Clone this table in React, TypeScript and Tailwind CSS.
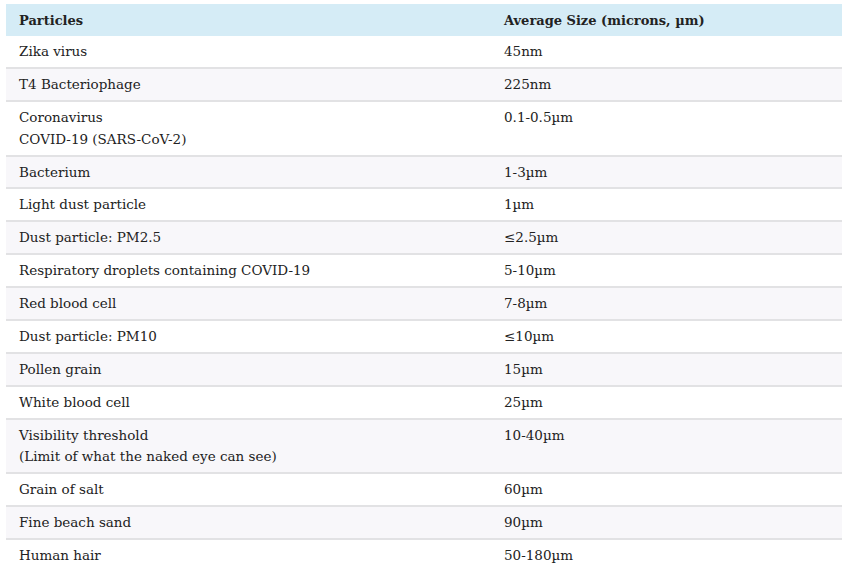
import React from 'react';

type Row = { name: string[]; size: string };

const rows: Row[] = [
  { name: ['Zika virus'], size: '45nm' },
  { name: ['T4 Bacteriophage'], size: '225nm' },
  { name: ['Coronavirus', 'COVID-19 (SARS-CoV-2)'], size: '0.1-0.5µm' },
  { name: ['Bacterium'], size: '1-3µm' },
  { name: ['Light dust particle'], size: '1µm' },
  { name: ['Dust particle: PM2.5'], size: '≤2.5µm' },
  { name: ['Respiratory droplets containing COVID-19'], size: '5-10µm' },
  { name: ['Red blood cell'], size: '7-8µm' },
  { name: ['Dust particle: PM10'], size: '≤10µm' },
  { name: ['Pollen grain'], size: '15µm' },
  { name: ['White blood cell'], size: '25µm' },
  { name: ['Visibility threshold', '(Limit of what the naked eye can see)'], size: '10-40µm' },
  { name: ['Grain of salt'], size: '60µm' },
  { name: ['Fine beach sand'], size: '90µm' },
  { name: ['Human hair'], size: '50-180µm' },
];

export default function App() {
  return (
    <div className="w-[850px] h-[571px] overflow-hidden bg-white pt-1 pl-[6px] pr-2 text-[#222] text-[13.5px] leading-[21.7px]" style={{ fontFamily: '"DejaVu Serif", serif' }}>
      <div className="flex flex-col">
        {/* header */}
        <div className="flex bg-[#d5ecf6] font-bold text-[13px] pt-[5.5px] pb-[5px]">
          <div className="w-[485px] pl-[13px]">Particles</div>
          <div className="flex-1 pl-[13px]">Average Size (microns, µm)</div>
        </div>
        {rows.map((r, i) => (
          <div
            key={i}
            className={`flex pt-[5px] pb-[4.2px] border-b-2 border-[#e2e2e4] ${i % 2 === 1 ? 'bg-[#f8f7fa]' : 'bg-white'}`}
          >
            <div className="w-[485px] pl-[13px]">
              {r.name.map((n, j) => (
                <div key={j}>{n}</div>
              ))}
            </div>
            <div className="flex-1 pl-[13px]">{r.size}</div>
          </div>
        ))}
      </div>
    </div>
  );
}
